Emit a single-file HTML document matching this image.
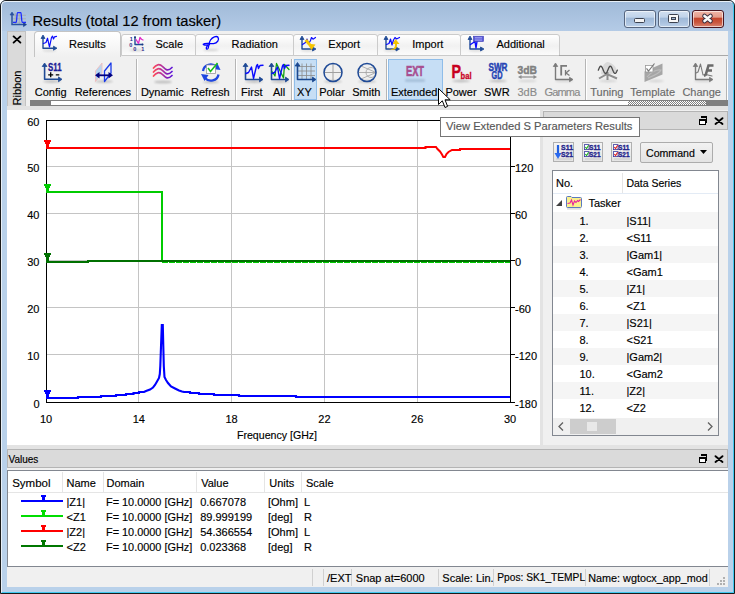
<!DOCTYPE html><html><head><meta charset="utf-8"><style>
*{margin:0;padding:0;box-sizing:border-box}
html,body{width:735px;height:594px;overflow:hidden;background:#fff}
body{position:relative;font-family:"Liberation Sans", sans-serif;}
.t{position:absolute;white-space:nowrap;line-height:1;-webkit-text-stroke:0.15px currentColor;}
.b{position:absolute}
svg{position:absolute;overflow:visible}
</style></head><body>
<div class="b" style="left:0px;top:0px;width:735px;height:594px;background:#b9d1ea;border-radius:6px 6px 0 0;"></div>
<div class="b" style="left:0px;top:0px;width:735px;height:31px;background:linear-gradient(#9fb9d8,#b4cbe6);border-radius:6px 6px 0 0;"></div>
<div class="b" style="left:0px;top:0px;width:735px;height:594px;border:1px solid #1a1a1a;border-radius:6px 6px 0 0;"></div>
<div class="b" style="left:1px;top:1px;width:733px;height:592px;border-left:1px solid #e8f0f8;border-top:1px solid #e8f0f8;border-right:1px solid #40c8f0;border-bottom:1px solid #40c8f0;border-radius:5px 5px 0 0;"></div>
<svg style="left:0;top:0" width="30" height="30" viewBox="0 0 30 30">
<path d="M13 15.3H26M13 18.8H26M13 22.3H26M15.3 13V24M19.3 13V24" stroke="#a8a8a0" stroke-width="0.7" fill="none"/>
<path d="M12 13.5V24.6H25" stroke="#2a52a0" stroke-width="1.5" fill="none"/>
<path d="M10 15L12 12L14 15Z" fill="#2a52a0" stroke="#2a52a0" stroke-width="0.6"/><path d="M23.5 22.6L26.5 24.6L23.5 26.6Z" fill="#1a4090" stroke="#1a4090" stroke-width="0.6"/>
<path d="M13 22.3H16.3C16.8 22.3 16.8 12.6 17.5 12.6H20.8C21.5 12.6 21.5 22.3 22.2 22.3H26" stroke="#1d2cff" stroke-width="1.3" fill="none"/>
</svg>
<div class="t" style="left:32.5px;top:14px;font-size:14.7px;color:#000;">Results (total 12 from tasker)</div>
<div class="b" style="left:624px;top:10px;width:32px;height:18px;background:linear-gradient(#d2e0f0 0%,#c0d3ea 40%,#9fb9d8 42%,#a9c1de 70%,#bcd1ea 100%);border:1px solid #56657e;border-radius:3px;box-shadow:inset 0 0 0 1px rgba(255,255,255,0.6);"></div>
<div class="b" style="left:658px;top:10px;width:32px;height:18px;background:linear-gradient(#d2e0f0 0%,#c0d3ea 40%,#9fb9d8 42%,#a9c1de 70%,#bcd1ea 100%);border:1px solid #56657e;border-radius:3px;box-shadow:inset 0 0 0 1px rgba(255,255,255,0.6);"></div>
<div class="b" style="left:692px;top:10px;width:32px;height:18px;background:linear-gradient(#f0b6a8 0%,#e49c8a 40%,#c4452c 42%,#c9553c 70%,#d88472 100%);border:1px solid #4a1620;border-radius:3px;box-shadow:inset 0 0 0 1px rgba(255,255,255,0.6);"></div>
<div class="b" style="left:634px;top:18px;width:11px;height:5px;background:#f4f4f4;border:1px solid #3c4250;border-radius:1.5px"></div>
<div class="b" style="left:668px;top:14px;width:11px;height:9px;background:#f8f8f8;border:1px solid #3c4250;border-radius:1.5px"></div>
<div class="b" style="left:671px;top:17px;width:5px;height:3px;background:#9fb5cf;border:1px solid #3c4250;"></div>
<svg style="left:700px;top:12px" width="16" height="14" viewBox="0 0 16 14"><path d="M4.5 4L10.5 9M10.5 4L4.5 9" stroke="#3c3040" stroke-width="4.6" stroke-linecap="round"/><path d="M4.5 4L10.5 9M10.5 4L4.5 9" stroke="#fafafa" stroke-width="2.6" stroke-linecap="round"/></svg>
<div class="b" style="left:7px;top:31px;width:721px;height:556px;background:#f0f0f0;"></div>
<div class="b" style="left:7px;top:31px;width:19px;height:76px;background:#dadada;border:1px solid #c2c2c2;"></div>
<svg style="left:12px;top:35px" width="10" height="9" viewBox="0 0 10 9"><path d="M1.6 1.4L8.4 7.6M8.4 1.4L1.6 7.6" stroke="#000" stroke-width="1.9" stroke-linecap="round"/></svg>
<div class="t" style="left:16.5px;top:88px;font-size:11px;transform:translate(-50%,-50%) rotate(-90deg);transform-origin:center;">Ribbon</div>
<div class="b" style="left:121px;top:34px;width:75px;height:22px;background:linear-gradient(#ffffff,#f1f1f1 55%,#fbfbfb);border:1px solid #cbcbcb;border-radius:3px 3px 0 0;"></div>
<div class="b" style="left:195px;top:34px;width:99px;height:22px;background:linear-gradient(#ffffff,#f1f1f1 55%,#fbfbfb);border:1px solid #cbcbcb;border-radius:3px 3px 0 0;"></div>
<div class="b" style="left:293px;top:34px;width:85px;height:22px;background:linear-gradient(#ffffff,#f1f1f1 55%,#fbfbfb);border:1px solid #cbcbcb;border-radius:3px 3px 0 0;"></div>
<div class="b" style="left:377px;top:34px;width:84px;height:22px;background:linear-gradient(#ffffff,#f1f1f1 55%,#fbfbfb);border:1px solid #cbcbcb;border-radius:3px 3px 0 0;"></div>
<div class="b" style="left:460px;top:34px;width:100px;height:22px;background:linear-gradient(#ffffff,#f1f1f1 55%,#fbfbfb);border:1px solid #cbcbcb;border-radius:3px 3px 0 0;"></div>
<div class="b" style="left:34px;top:31px;width:87px;height:26px;background:linear-gradient(#ffffff,#f8f8f8 50%,#f0f0f0);border:1px solid #c4c4c4;border-bottom:none;border-radius:4px 4px 0 0;"></div>
<div class="b" style="left:559px;top:55px;width:169px;height:1px;background:#a9a9a9;"></div>
<div class="t" style="left:69px;top:39px;font-size:11px;color:#000;">Results</div>
<div class="t" style="left:155.5px;top:39px;font-size:11px;color:#000;">Scale</div>
<div class="t" style="left:231.5px;top:39px;font-size:11px;color:#000;">Radiation</div>
<div class="t" style="left:328.3px;top:39px;font-size:11px;color:#000;">Export</div>
<div class="t" style="left:412.2px;top:39px;font-size:11px;color:#000;">Import</div>
<div class="t" style="left:496.5px;top:39px;font-size:11px;color:#000;">Additional</div>
<div class="b" style="left:136px;top:59px;width:1px;height:41px;background:#b5b5b5;border-right:1px solid #fff;width:2px"></div>
<div class="b" style="left:235px;top:59px;width:1px;height:41px;background:#b5b5b5;border-right:1px solid #fff;width:2px"></div>
<div class="b" style="left:291px;top:59px;width:1px;height:41px;background:#b5b5b5;border-right:1px solid #fff;width:2px"></div>
<div class="b" style="left:386px;top:59px;width:1px;height:41px;background:#b5b5b5;border-right:1px solid #fff;width:2px"></div>
<div class="b" style="left:585px;top:59px;width:1px;height:41px;background:#b5b5b5;border-right:1px solid #fff;width:2px"></div>
<div class="b" style="left:726px;top:59px;width:1px;height:41px;background:#b5b5b5;border-right:1px solid #fff;width:2px"></div>
<div class="b" style="left:294px;top:59px;width:23px;height:41px;background:#c6def5;border:1px solid #8fbde9;"></div>
<div class="b" style="left:388px;top:59px;width:55px;height:41px;background:#c6def5;border:1px solid #8fbde9;"></div>
<svg style="left:0;top:0" width="735" height="110" viewBox="0 0 735 110"><defs><filter id="blur1" x="-50%" y="-200%" width="200%" height="500%"><feGaussianBlur stdDeviation="0.8"/></filter><linearGradient id="wave" x1="0" x2="1" y1="0" y2="0"><stop offset="0" stop-color="#ff4a5a"/><stop offset="0.5" stop-color="#b030a0"/><stop offset="1" stop-color="#5a10d8"/></linearGradient></defs><ellipse cx="49.5" cy="50.5" rx="7" ry="1" fill="#000" opacity="0.12" filter="url(#blur1)"/><g transform="translate(38,33)"><path d="M5 4 V15.2 H17" stroke="#1f4a96" stroke-width="1.4" fill="none" stroke-linejoin="round"/><path d="M3 5.5 L5 2 L7 5.5Z" fill="#1f4a96" stroke="#1f4a96" stroke-width="0.8" stroke-linejoin="round"/><path d="M15.5 13.2 L19 15.2 L15.5 17.2Z" fill="#1f4a96" stroke="#1f4a96" stroke-width="0.8" stroke-linejoin="round"/></g><path transform="translate(38,33)" d="M5.5 10.5 L8 9.5 L9.5 5.2 L11.5 14 L13.5 4.5 L14.5 3.2 L15.5 6 L16.5 3.8 L18.5 3.4" stroke="#0a0aff" stroke-width="1.2" fill="none" stroke-linejoin="round" stroke-linecap="round" /><ellipse cx="136.5" cy="50.2" rx="7" ry="1" fill="#000" opacity="0.15" filter="url(#blur1)"/><g transform="translate(126,33)" fill="#2a2a8a" font-family="Liberation Sans" font-weight="bold" font-size="5.5"><text x="3.8" y="7.5">1</text><text x="3.3" y="14.3">0</text><text x="7.3" y="18.3">0</text><text x="15.3" y="18.3">1</text></g><path transform="translate(126,33)" d="M9 4.2 L9 11.5 L16.5 11.5" stroke="#1f4a96" stroke-width="1.4" fill="none" stroke-linejoin="round" stroke-linecap="round" /><circle cx="135" cy="37.2" r="1" fill="#1a3a80"/><circle cx="142.5" cy="44.5" r="1" fill="#1a3a80"/><path transform="translate(126,33)" d="M10 6.5 L12.5 10.3 L14 4.5 L15.5 6.2 L17 7" stroke="#e02ac8" stroke-width="1.3" fill="none" stroke-linejoin="round" stroke-linecap="round" /><ellipse cx="211" cy="50" rx="7.5" ry="1" fill="#000" opacity="0.15" filter="url(#blur1)"/><path transform="translate(200,35)" d="M3.3 9.2 C5 7.6 10 8.8 13.5 8.6 C17.5 8 19.5 4.5 18 2.3 C16.5 0.5 12.5 2 10.5 5 C8.5 8 9 11.5 8 13.5 C7 15 5.5 13.5 6.8 11.5 C7.5 10.2 9 9.8 10 9.7 C5.5 10.5 3 10 3.3 9.2Z" stroke="#0000ff" stroke-width="1.35" fill="none"/><ellipse cx="308" cy="50.5" rx="7" ry="1" fill="#000" opacity="0.12" filter="url(#blur1)"/><g transform="translate(297,33)"><path d="M5 5 V16 H17" stroke="#1f4a96" stroke-width="1.4" fill="none" stroke-linejoin="round"/><path d="M3 6.5 L5 3 L7 6.5Z" fill="#1f4a96" stroke="#1f4a96" stroke-width="0.8" stroke-linejoin="round"/><path d="M15.5 14 L19 16 L15.5 18Z" fill="#1f4a96" stroke="#1f4a96" stroke-width="0.8" stroke-linejoin="round"/></g><path transform="translate(297,33)" d="M5.5 11.5 L8.5 9.5 L10 6 L11.5 11 L13.5 7.5 L14.5 4.5 L16 6.2 L18.5 4.5" stroke="#0a0aff" stroke-width="1.2" fill="none" stroke-linejoin="round" stroke-linecap="round" /><path transform="translate(297,33)" d="M7.5 8 L10 6 L14 11 L18.5 11.5 L14.5 17 L11.5 12.5 Z" fill="#f5c400"/><ellipse cx="391" cy="50.5" rx="7" ry="1" fill="#000" opacity="0.12" filter="url(#blur1)"/><g transform="translate(380,33)"><path d="M6 5 V16 H17.5" stroke="#1f4a96" stroke-width="1.4" fill="none" stroke-linejoin="round"/><path d="M4 6.5 L6 3 L8 6.5Z" fill="#1f4a96" stroke="#1f4a96" stroke-width="0.8" stroke-linejoin="round"/><path d="M16.0 14 L19.5 16 L16.0 18Z" fill="#1f4a96" stroke="#1f4a96" stroke-width="0.8" stroke-linejoin="round"/></g><path transform="translate(380,33)" d="M6.5 11.5 L9 10.5 L10.5 6 L12 12 L13.5 7 L15 4.5 L16.5 6 L19.5 4.5" stroke="#0a0aff" stroke-width="1.2" fill="none" stroke-linejoin="round" stroke-linecap="round" /><path transform="translate(380,33)" d="M8 14 C10 17 15 17 15 12 L15 11 L12.5 11 L15.5 6 L19.5 11 L17 11 L17 12.5 C17 18 10.5 18 8 14Z" fill="#f5c400"/><ellipse cx="476" cy="50.5" rx="7" ry="1" fill="#000" opacity="0.12" filter="url(#blur1)"/><g transform="translate(465,33)"><path d="M5 5 V16 H17" stroke="#1f4a96" stroke-width="1.4" fill="none" stroke-linejoin="round"/><path d="M3 6.5 L5 3 L7 6.5Z" fill="#1f4a96" stroke="#1f4a96" stroke-width="0.8" stroke-linejoin="round"/><path d="M15.5 14 L19 16 L15.5 18Z" fill="#1f4a96" stroke="#1f4a96" stroke-width="0.8" stroke-linejoin="round"/></g><path transform="translate(465,33)" d="M5.5 11.5 L8.5 9.5 L10 8.5 L11 15 L12 8.5" stroke="#0a0aff" stroke-width="1.4" fill="none" stroke-linejoin="round" stroke-linecap="round" /><rect x="473.5" y="36.2" width="10" height="5.3" fill="#5a5adc" stroke="#3a3ab0" stroke-width="0.6"/><path d="M475 37.5h7M475 39h7M475 40.3h7" stroke="#c8c8ff" stroke-width="0.5"/><ellipse cx="52" cy="81.5" rx="9" ry="1.2" fill="#000" opacity="0.22" filter="url(#blur1)"/><g transform="translate(38,59)"><path d="M6.6 6 V20.3 H22" stroke="#1f4a96" stroke-width="1.6" fill="none" stroke-linejoin="round"/><path d="M4.199999999999999 7.5 L6.6 4 L9.0 7.5Z" fill="#1f4a96" stroke="#1f4a96" stroke-width="0.8" stroke-linejoin="round"/><path d="M20.5 17.900000000000002 L24 20.3 L20.5 22.7Z" fill="#1f4a96" stroke="#1f4a96" stroke-width="0.8" stroke-linejoin="round"/></g><text x="48" y="70.6" font-family="Liberation Sans" font-weight="bold" font-size="10" fill="#1a1a96" stroke="#1a1a96" stroke-width="0.3" textLength="13.5" lengthAdjust="spacingAndGlyphs">S11</text><path d="M48.2 74.8h5M50.7 72.3v5M55.8 74.8h3.5" stroke="#000" stroke-width="1.3"/><ellipse cx="104" cy="81.5" rx="9" ry="1.2" fill="#000" opacity="0.22" filter="url(#blur1)"/><path d="M95.5 81.5 V71 L102 63 V73Z" fill="#a8d0f0" stroke="#f0b0b0" stroke-width="0.9" opacity="0.8"/><path d="M104.5 81.5 V71 L111 63 V73Z" fill="none" stroke="#1a3ae8" stroke-width="1.3" stroke-linejoin="round"/><path d="M98.5 75.3 H110.5" stroke="#000080" stroke-width="1.8"/><path d="M95 75.3 L99.5 72 V78.6Z M113 75.3 L108.5 72 V78.6Z" fill="#000080"/><ellipse cx="163" cy="82" rx="9" ry="1.3" fill="#000" opacity="0.22" filter="url(#blur1)"/><path transform="translate(149,59)" d="M4.5 9 C7 5.5 10.5 4.5 13.5 7.5 C16.5 10.5 18.5 13 23 8.5" stroke="url(#wave)" stroke-width="1.7" fill="none" stroke-linecap="round"/><path transform="translate(149,63)" d="M4.5 9 C7 5.5 10.5 4.5 13.5 7.5 C16.5 10.5 18.5 13 23 8.5" stroke="url(#wave)" stroke-width="1.7" fill="none" stroke-linecap="round"/><path transform="translate(149,67)" d="M4.5 9 C7 5.5 10.5 4.5 13.5 7.5 C16.5 10.5 18.5 13 23 8.5" stroke="url(#wave)" stroke-width="1.7" fill="none" stroke-linecap="round"/><ellipse cx="211" cy="82" rx="8" ry="1.2" fill="#000" opacity="0.22" filter="url(#blur1)"/><g transform="translate(197,59)"><path d="M6 12 C7 5.5 15 3.5 19.5 8" stroke="#1e46e0" stroke-width="2.3" fill="none"/><path d="M16 10 L23.5 11 L20.5 4.5Z" fill="#1e46e0"/><path d="M21.5 15.5 C20.5 22 12 23.5 8 19" stroke="#1e46e0" stroke-width="2.3" fill="none"/><path d="M11.5 16 L4 15 L7.5 22Z" fill="#1e46e0"/><rect x="9.5" y="6" width="9" height="8.5" fill="#fff" stroke="#9a9a9a" stroke-width="0.8"/><path d="M11 9 L13.5 12.5 L20.5 4" stroke="#18c018" stroke-width="1.6" fill="none"/></g><ellipse cx="254" cy="81.5" rx="9" ry="1.2" fill="#000" opacity="0.22" filter="url(#blur1)"/><g transform="translate(240,59)"><path d="M5.5 6 V20.5 H21" stroke="#1f4a96" stroke-width="1.6" fill="none" stroke-linejoin="round"/><path d="M3.1 7.5 L5.5 4 L7.9 7.5Z" fill="#1f4a96" stroke="#1f4a96" stroke-width="0.8" stroke-linejoin="round"/><path d="M19.5 18.1 L23 20.5 L19.5 22.9Z" fill="#1f4a96" stroke="#1f4a96" stroke-width="0.8" stroke-linejoin="round"/></g><path transform="translate(240,59)" d="M6 14.5 L8.5 13.5 L11.5 8 L13.5 19.5 L16.5 7 L17.5 5.5 L18.5 9.5 L20 6.5 L23 6.3" stroke="#0a0aff" stroke-width="1.4" fill="none" stroke-linejoin="round" stroke-linecap="round" /><ellipse cx="280" cy="81.5" rx="9" ry="1.2" fill="#000" opacity="0.22" filter="url(#blur1)"/><g transform="translate(266,59)"><path d="M5.5 6 V20.5 H21" stroke="#1f4a96" stroke-width="1.6" fill="none" stroke-linejoin="round"/><path d="M3.1 7.5 L5.5 4 L7.9 7.5Z" fill="#1f4a96" stroke="#1f4a96" stroke-width="0.8" stroke-linejoin="round"/><path d="M19.5 18.1 L23 20.5 L19.5 22.9Z" fill="#1f4a96" stroke="#1f4a96" stroke-width="0.8" stroke-linejoin="round"/></g><path transform="translate(266,59)" d="M6.5 13 L9 17 L10.5 4.5 L17.5 19 L18.5 5.5 L23 10.5" stroke="#10a010" stroke-width="1.3" fill="none" stroke-linejoin="round" stroke-linecap="round" /><path transform="translate(266,59)" d="M6 14.5 L8.5 13.5 L11.5 8 L13.5 19.5 L16.5 7 L17.5 5.5 L18.5 9.5 L20 6.5 L23 6.3" stroke="#0a0aff" stroke-width="1.4" fill="none" stroke-linejoin="round" stroke-linecap="round" /><g stroke="#8a8a8a" stroke-width="0.8"><path d="M302 63.5V79M306.5 63.5V79M311 63.5V79M298 66.5H315M298 71H315M298 75.5H315"/></g><g transform="translate(0,0)"><path d="M297.5 64.5 V79.5 H314" stroke="#1a4890" stroke-width="1.6" fill="none" stroke-linejoin="round"/><path d="M295.1 66.0 L297.5 62.5 L299.9 66.0Z" fill="#1a4890" stroke="#1a4890" stroke-width="0.8" stroke-linejoin="round"/><path d="M312.5 77.1 L316 79.5 L312.5 81.9Z" fill="#1a4890" stroke="#1a4890" stroke-width="0.8" stroke-linejoin="round"/></g><ellipse cx="333" cy="81.5" rx="9" ry="1.2" fill="#000" opacity="0.22" filter="url(#blur1)"/><path d="M324 72.5H342M333 63.5V81.5" stroke="#a0a0a0" stroke-width="1"/><circle cx="333" cy="72.5" r="9" fill="none" stroke="#1f4a96" stroke-width="1.5"/><ellipse cx="367" cy="81.5" rx="9" ry="1.2" fill="#000" opacity="0.22" filter="url(#blur1)"/><g stroke="#a0a0a0" stroke-width="0.8" fill="none"><path d="M358 72.5H376"/><circle cx="371" cy="72.5" r="5"/><path d="M361 66 L376 72.5 L361 79"/></g><circle cx="367" cy="72.5" r="9" fill="none" stroke="#1f4a96" stroke-width="1.5"/><rect x="405" y="79.5" width="20" height="2" rx="1" fill="#7a96b4" opacity="0.6" filter="url(#blur1)"/><text x="406" y="75.5" font-family="Liberation Sans" font-weight="bold" font-size="14.5" fill="#a84e90" stroke="#a84e90" stroke-width="0.6" textLength="18" lengthAdjust="spacingAndGlyphs">EXT</text><ellipse cx="461" cy="81" rx="9" ry="1.2" fill="#000" opacity="0.22" filter="url(#blur1)"/><text x="451.5" y="78" font-family="Liberation Sans" font-weight="bold" font-size="19" fill="#c8001e" stroke="#c8001e" stroke-width="0.5" textLength="9.5" lengthAdjust="spacingAndGlyphs">P</text><text x="460.5" y="78.5" font-family="Liberation Sans" font-weight="bold" font-size="9" fill="#c8001e" stroke="#c8001e" stroke-width="0.3" textLength="11" lengthAdjust="spacingAndGlyphs">bal</text><ellipse cx="498" cy="81" rx="9" ry="1.2" fill="#000" opacity="0.22" filter="url(#blur1)"/><text x="488.5" y="71" font-family="Liberation Sans" font-weight="bold" font-size="10" fill="#2443b4" stroke="#2443b4" stroke-width="0.45" textLength="19" lengthAdjust="spacingAndGlyphs">SWR</text><text x="491.5" y="79" font-family="Liberation Sans" font-weight="bold" font-size="10" fill="#2443b4" stroke="#2443b4" stroke-width="0.45" textLength="11" lengthAdjust="spacingAndGlyphs">GD</text><ellipse cx="527.5" cy="81" rx="9" ry="1" fill="#000" opacity="0.12" filter="url(#blur1)"/><text x="517.5" y="74" font-family="Liberation Sans" font-weight="bold" font-size="11.5" fill="#808080" stroke="#808080" stroke-width="0.4" textLength="19.5" lengthAdjust="spacingAndGlyphs">3dB</text><path d="M520 77H535" stroke="#8c8c8c" stroke-width="1.2"/><path d="M518 77L521.5 75V79Z M537 77L533.5 75V79Z" fill="#8c8c8c"/><ellipse cx="564" cy="81" rx="9" ry="1" fill="#000" opacity="0.12" filter="url(#blur1)"/><g transform="translate(548,59)"><path d="M7.5 6 V20.5 H23" stroke="#7a7a7a" stroke-width="1.4" fill="none" stroke-linejoin="round"/><path d="M5.3 7.5 L7.5 4 L9.7 7.5Z" fill="#7a7a7a" stroke="#7a7a7a" stroke-width="0.8" stroke-linejoin="round"/><path d="M21.5 18.3 L25 20.5 L21.5 22.7Z" fill="#7a7a7a" stroke="#7a7a7a" stroke-width="0.8" stroke-linejoin="round"/></g><path d="M561.2 75.5V65.8H567" stroke="#7a7a7a" stroke-width="1.8" fill="none"/><path d="M565.5 70V75.5M569.5 70L566 73L569.5 75.5" stroke="#7a7a7a" stroke-width="1.3" fill="none"/><ellipse cx="608" cy="81" rx="9" ry="1.2" fill="#000" opacity="0.12" filter="url(#blur1)"/><path d="M601 74 C602 64 606 62 608 62 C612 63 616 66 617 71 C614 74 604 76 601 74Z" fill="#c8c8c8" opacity="0.55"/><path d="M599 78.5 L607 74 L617 78.5 M607.5 72 V80" stroke="#8e8e8e" stroke-width="2" fill="none"/><path d="M598.30 70.15 L598.80 68.95 L599.30 67.85 L599.80 66.97 L600.30 66.40 L600.80 66.20 L601.30 66.40 L601.80 66.97 L602.30 67.85 L602.80 68.95 L603.30 70.15 L603.80 71.32 L604.30 72.32 L604.80 73.06 L605.30 73.45 L605.80 73.45 L606.30 73.06 L606.80 72.32 L607.30 71.32 L607.80 70.15 L608.30 68.95 L608.80 67.85 L609.30 66.97 L609.80 66.40 L610.30 66.20 L610.80 66.40 L611.30 66.97 L611.80 67.85 L612.30 68.95 L612.80 70.15 L613.30 71.32 L613.80 72.32 L614.30 73.06 L614.80 73.45 L615.30 73.45 L615.80 73.06 L616.30 72.32 L616.80 71.32 L617.30 70.15" stroke="#4a4a4a" stroke-width="1.3" fill="none" stroke-linecap="round"/><ellipse cx="656" cy="81" rx="8" ry="1.2" fill="#000" opacity="0.12" filter="url(#blur1)"/><path d="M644.5 82 V71.5 L662.5 63.5 V74.5Z" fill="#a6a6a6"/><path d="M647 77 C651 72 657 69 661 70 C660 73 653 76 648 78" stroke="#bdbdbd" stroke-width="1.2" fill="none"/><rect x="645.5" y="65.5" width="7.5" height="6.5" fill="#fff" stroke="#9a9a9a" stroke-width="0.8"/><path d="M646.5 68.3 L648.5 71 L654.5 63.5" stroke="#7a7a7a" stroke-width="1.2" fill="none"/><ellipse cx="703" cy="81" rx="9" ry="1" fill="#000" opacity="0.12" filter="url(#blur1)"/><g transform="translate(688,59)"><path d="M7.5 6 V20.5 H23" stroke="#7a7a7a" stroke-width="1.4" fill="none" stroke-linejoin="round"/><path d="M5.3 7.5 L7.5 4 L9.7 7.5Z" fill="#7a7a7a" stroke="#7a7a7a" stroke-width="0.8" stroke-linejoin="round"/><path d="M21.5 18.3 L25 20.5 L21.5 22.7Z" fill="#7a7a7a" stroke="#7a7a7a" stroke-width="0.8" stroke-linejoin="round"/></g><path transform="translate(688,59)" d="M8 14 L10 13 L12.5 5 L15 16 L18 15.5 L24 17" stroke="#7a7a7a" stroke-width="1.1" fill="none" stroke-linejoin="round" stroke-linecap="round" /><path d="M705.5 75.5 L708.5 65.5H713.5M707 70.5H712M705.5 75.5H704" stroke="#6a6a6a" stroke-width="2.6" fill="none"/></svg>
<div class="t" style="left:-9.299999999999997px;width:120px;text-align:center;top:86.5px;font-size:11px;color:#000;">Config</div>
<div class="t" style="left:42.8px;width:120px;text-align:center;top:86.5px;font-size:11px;color:#000;">References</div>
<div class="t" style="left:102.30000000000001px;width:120px;text-align:center;top:86.5px;font-size:11px;color:#000;">Dynamic</div>
<div class="t" style="left:150.3px;width:120px;text-align:center;top:86.5px;font-size:11px;color:#000;">Refresh</div>
<div class="t" style="left:191.8px;width:120px;text-align:center;top:86.5px;font-size:11px;color:#000;">First</div>
<div class="t" style="left:219px;width:120px;text-align:center;top:86.5px;font-size:11px;color:#000;">All</div>
<div class="t" style="left:244.39999999999998px;width:120px;text-align:center;top:86.5px;font-size:11px;color:#000;">XY</div>
<div class="t" style="left:272px;width:120px;text-align:center;top:86.5px;font-size:11px;color:#000;">Polar</div>
<div class="t" style="left:306.3px;width:120px;text-align:center;top:86.5px;font-size:11px;color:#000;">Smith</div>
<div class="t" style="left:354.2px;width:120px;text-align:center;top:86.5px;font-size:11px;color:#000;">Extended</div>
<div class="t" style="left:401px;width:120px;text-align:center;top:86.5px;font-size:11px;color:#000;">Power</div>
<div class="t" style="left:436.8px;width:120px;text-align:center;top:86.5px;font-size:11px;color:#000;">SWR</div>
<div class="t" style="left:467.20000000000005px;width:120px;text-align:center;top:86.5px;font-size:11px;color:#8a8a8a;">3dB</div>
<div class="t" style="left:502px;width:120px;text-align:center;top:86.5px;font-size:11px;color:#8a8a8a;"><span style="letter-spacing:-0.8px">Gamma</span></div>
<div class="t" style="left:546.9px;width:120px;text-align:center;top:86.5px;font-size:11px;color:#6a6a6a;">Tuning</div>
<div class="t" style="left:592.7px;width:120px;text-align:center;top:86.5px;font-size:11px;color:#6a6a6a;">Template</div>
<div class="t" style="left:641.7px;width:120px;text-align:center;top:86.5px;font-size:11px;color:#6a6a6a;">Change</div>
<div class="b" style="left:30px;top:100px;width:698px;height:6px;background:#fff;border:1px solid #7f7f7f;border-right:none"></div>
<div class="b" style="left:30px;top:100px;width:21px;height:6px;background:#7f7f7f;"></div>
<div class="b" style="left:628px;top:101px;width:79px;height:4px;background-image:repeating-conic-gradient(#7f7f7f 0% 25%, #fff 0% 50%);background-size:2px 2px;"></div>
<div class="b" style="left:706px;top:100px;width:22px;height:6px;background:#7f7f7f;"></div>
<div class="b" style="left:7px;top:106px;width:721px;height:4px;background:#e3e3e3;"></div>
<div class="b" style="left:7px;top:110px;width:533px;height:335px;background:#fff;"></div>
<div class="b" style="left:540px;top:110px;width:3px;height:335px;background:#e3e3e3;"></div>
<svg style="left:0;top:0" width="735" height="594" viewBox="0 0 735 594"><g shape-rendering="crispEdges" stroke="#c4c4c4" stroke-width="1"><line x1="46" y1="354.5" x2="510" y2="354.5"/><line x1="46" y1="307.5" x2="510" y2="307.5"/><line x1="46" y1="260.5" x2="510" y2="260.5"/><line x1="46" y1="213.5" x2="510" y2="213.5"/><line x1="46" y1="166.5" x2="510" y2="166.5"/><line x1="138.5" y1="120" x2="138.5" y2="402"/><line x1="231.5" y1="120" x2="231.5" y2="402"/><line x1="324.5" y1="120" x2="324.5" y2="402"/><line x1="417.5" y1="120" x2="417.5" y2="402"/></g><g shape-rendering="crispEdges" stroke="#000" stroke-width="1" fill="none"><rect x="46.5" y="120.5" width="464" height="282"/><line x1="510" y1="402.5" x2="515" y2="402.5"/><line x1="510" y1="354.5" x2="515" y2="354.5"/><line x1="510" y1="307.5" x2="515" y2="307.5"/><line x1="510" y1="260.5" x2="515" y2="260.5"/><line x1="510" y1="213.5" x2="515" y2="213.5"/><line x1="510" y1="166.5" x2="515" y2="166.5"/></g><polyline fill="none" stroke="#ff0000" stroke-width="2" stroke-linejoin="miter" points="46,148 425.5,148 425.5,147 436,147 437.5,149 440,151.5 442,154.5 443.3,157 445,157 446.5,154 448.5,152 452,150 460,150 460,149 510,149"/><polyline fill="none" stroke="#00cc00" stroke-width="2" stroke-linejoin="miter" points="46,192 162,192 162,262"/><line x1="162" y1="262.5" x2="510" y2="262.5" stroke="#00cc00" stroke-width="1" stroke-dasharray="6 1" shape-rendering="crispEdges"/><polyline fill="none" stroke="#007000" stroke-width="2" stroke-linejoin="miter" points="46,262 88,262 88,261 510,261"/><polyline fill="none" stroke="#0000ff" stroke-width="2.1" stroke-linejoin="miter" points="46,398 78,398 78,397 101,397 101,396 116,396 116,395 126,395 126,394 133.5,394 133.5,393 139,393 139,392 144,392 146,391 150,389.5 153,387.5 155,385 157,381.5 159,378 159.8,374 160.3,366 160.8,352 161.8,325 162.8,325 163.3,346 163.8,366 164.5,377 166,380 168,383 171,386.5 175,388.5 179,390.5 182,391.5 184,392 190,392 190,393 199,393 199,394 214,394 214,395 239,395 239,396 296,396 296,397 510,397"/><polygon fill="#ff0000" shape-rendering="crispEdges" points="44,140 51,140 51,142 50,142 50,144 49,144 49,148 46,148 46,144 45,144 45,142 44,142"/><polygon fill="#00cc00" shape-rendering="crispEdges" points="44,184 51,184 51,186 50,186 50,188 49,188 49,192 46,192 46,188 45,188 45,186 44,186"/><polygon fill="#007000" shape-rendering="crispEdges" points="44,253 51,253 51,255 50,255 50,257 49,257 49,261 46,261 46,257 45,257 45,255 44,255"/><polygon fill="#0000ff" shape-rendering="crispEdges" points="44,390 51,390 51,392 50,392 50,394 49,394 49,398 46,398 46,394 45,394 45,392 44,392"/></svg>
<div class="t" style="left:-60.5px;width:100px;text-align:right;top:399px;font-size:11px;color:#000;">0</div>
<div class="t" style="left:-60.5px;width:100px;text-align:right;top:351px;font-size:11px;color:#000;">10</div>
<div class="t" style="left:-60.5px;width:100px;text-align:right;top:304px;font-size:11px;color:#000;">20</div>
<div class="t" style="left:-60.5px;width:100px;text-align:right;top:257px;font-size:11px;color:#000;">30</div>
<div class="t" style="left:-60.5px;width:100px;text-align:right;top:210px;font-size:11px;color:#000;">40</div>
<div class="t" style="left:-60.5px;width:100px;text-align:right;top:163px;font-size:11px;color:#000;">50</div>
<div class="t" style="left:-60.5px;width:100px;text-align:right;top:117px;font-size:11px;color:#000;">60</div>
<div class="t" style="left:515px;top:398.5px;font-size:11px;color:#000;">-180</div>
<div class="t" style="left:515px;top:350.5px;font-size:11px;color:#000;">-120</div>
<div class="t" style="left:515px;top:303.5px;font-size:11px;color:#000;">-60</div>
<div class="t" style="left:515px;top:256.5px;font-size:11px;color:#000;">0</div>
<div class="t" style="left:515px;top:209.5px;font-size:11px;color:#000;">60</div>
<div class="t" style="left:515px;top:162.5px;font-size:11px;color:#000;">120</div>
<div class="t" style="left:-14.0px;width:120px;text-align:center;top:413.5px;font-size:11px;color:#000;">10</div>
<div class="t" style="left:78.80000000000001px;width:120px;text-align:center;top:413.5px;font-size:11px;color:#000;">14</div>
<div class="t" style="left:171.6px;width:120px;text-align:center;top:413.5px;font-size:11px;color:#000;">18</div>
<div class="t" style="left:264.4px;width:120px;text-align:center;top:413.5px;font-size:11px;color:#000;">22</div>
<div class="t" style="left:357.2px;width:120px;text-align:center;top:413.5px;font-size:11px;color:#000;">26</div>
<div class="t" style="left:450.0px;width:120px;text-align:center;top:413.5px;font-size:11px;color:#000;">30</div>
<div class="t" style="left:217px;width:120px;text-align:center;top:429.5px;font-size:10.6px;color:#000;">Frequency [GHz]</div>
<div class="b" style="left:543px;top:111px;width:185px;height:19px;background:#dadada;border:1px solid #b4b4b4;"></div>
<svg style="left:699px;top:116px" width="9" height="10" viewBox="0 0 9 10" shape-rendering="crispEdges"><path d="M2.5 1H7.5V6.5H6.5" stroke="#000" fill="none"/><rect x="2" y="0" width="6" height="2" fill="#000"/><rect x="0.5" y="3.5" width="5.5" height="5" stroke="#000" fill="#fff"/><rect x="0" y="3" width="6.5" height="2" fill="#000"/></svg>
<svg style="left:714px;top:116.5px" width="10" height="9" viewBox="0 0 10 9"><path d="M1.5 1.2L8.5 7M8.5 1.2L1.5 7" stroke="#000" stroke-width="1.9" stroke-linecap="round"/></svg>
<div class="b" style="left:553px;top:142px;width:21px;height:20px;background:linear-gradient(#f4f4f4,#e4e4e4);border:1px solid #b0b0b0;"></div>
<div class="b" style="left:582px;top:142px;width:21px;height:20px;background:linear-gradient(#f4f4f4,#e4e4e4);border:1px solid #b0b0b0;"></div>
<div class="b" style="left:611px;top:142px;width:21px;height:20px;background:linear-gradient(#f4f4f4,#e4e4e4);border:1px solid #b0b0b0;"></div>
<div class="b" style="left:640px;top:142px;width:73px;height:21px;background:linear-gradient(#f2f2f2,#e3e3e3);border:1px solid #acacac;border-radius:2px"></div>
<div class="t" style="left:646px;top:147.5px;font-size:10.6px;color:#000;">Command</div>
<svg style="left:700px;top:150px" width="7" height="4" viewBox="0 0 7 4"><path d="M0 0H7L3.5 4Z" fill="#000"/></svg>
<svg style="left:553px;top:142px" width="22" height="20" viewBox="0 0 22 20"><path d="M5 3V13" stroke="#1f5fe0" stroke-width="2.2"/><path d="M1.5 11L5 17L8.5 11Z" fill="#2a6af0"/><text x="8" y="8.3" font-size="7.6" font-family="Liberation Sans" font-weight="bold" fill="#24248c" stroke="#24248c" stroke-width="0.35" textLength="12" lengthAdjust="spacingAndGlyphs">S11</text><text x="8" y="15.3" font-size="7.6" font-family="Liberation Sans" font-weight="bold" fill="#24248c" stroke="#24248c" stroke-width="0.35" textLength="12" lengthAdjust="spacingAndGlyphs">S21</text><rect x="3" y="16.5" width="16" height="1" fill="#000" opacity="0.12"/></svg>
<svg style="left:582px;top:142px" width="22" height="20" viewBox="0 0 22 20"><g stroke="#3a3aa0" stroke-width="0.8" fill="#fff"><rect x="2.4" y="2.6" width="4.6" height="5"/><rect x="2.4" y="9.6" width="4.6" height="5"/></g><path d="M3.3 5 L4.6 6.6 L6.6 3.3 M3.3 12 L4.6 13.6 L6.6 10.3" stroke="#20b020" stroke-width="1.1" fill="none"/><text x="7" y="8.3" font-size="7.6" font-family="Liberation Sans" font-weight="bold" fill="#24248c" stroke="#24248c" stroke-width="0.35" textLength="11.5" lengthAdjust="spacingAndGlyphs">S11</text><text x="7" y="15.3" font-size="7.6" font-family="Liberation Sans" font-weight="bold" fill="#24248c" stroke="#24248c" stroke-width="0.35" textLength="11.5" lengthAdjust="spacingAndGlyphs">S21</text><rect x="3" y="16.5" width="16" height="1" fill="#000" opacity="0.12"/></svg>
<svg style="left:611px;top:142px" width="22" height="20" viewBox="0 0 22 20"><g stroke="#3a3aa0" stroke-width="0.8" fill="#fff"><rect x="2.4" y="2.6" width="4.6" height="5"/><rect x="2.4" y="9.6" width="4.6" height="5"/></g><path d="M3.3 5 L4.6 6.6 L6.6 3.3 M3.3 12 L4.6 13.6 L6.6 10.3" stroke="#e02020" stroke-width="1.1" fill="none"/><text x="7" y="8.3" font-size="7.6" font-family="Liberation Sans" font-weight="bold" fill="#24248c" stroke="#24248c" stroke-width="0.35" textLength="11.5" lengthAdjust="spacingAndGlyphs">S11</text><text x="7" y="15.3" font-size="7.6" font-family="Liberation Sans" font-weight="bold" fill="#24248c" stroke="#24248c" stroke-width="0.35" textLength="11.5" lengthAdjust="spacingAndGlyphs">S21</text><rect x="3" y="16.5" width="16" height="1" fill="#000" opacity="0.12"/></svg>
<div class="b" style="left:552px;top:170px;width:167px;height:266px;background:#fff;border:1px solid #828790;"></div>
<div class="b" style="left:553px;top:171px;width:165px;height:23px;background:#fff;border-bottom:1px solid #e3ebf5;"></div>
<div class="b" style="left:622px;top:173px;width:1px;height:20px;background:#e5e5e5;"></div>
<div class="t" style="left:556px;top:178px;font-size:11px;color:#000;">No.</div>
<div class="t" style="left:626.4px;top:178px;font-size:10.5px;color:#000;">Data Series</div>
<svg style="left:556px;top:200px" width="6" height="6" viewBox="0 0 6 6"><path d="M6 0V6H0Z" fill="#404040"/></svg>
<svg style="left:565px;top:195px" width="18" height="16" viewBox="0 0 18 16"><rect x="2" y="13.3" width="14" height="1.2" fill="#000" opacity="0.18"/><path d="M1.5 2.5 Q1.5 1.5 2.5 1.5 H6 L7 2.5 H15.5 Q16.5 2.5 16.5 3.5 V11.5 Q16.5 12.5 15.5 12.5 H2.5 Q1.5 12.5 1.5 11.5 Z" fill="#f9f18c" stroke="#5b79c0" stroke-width="1"/><path d="M2.5 8.5 L5 8 L6.5 5 L8 10 L9.5 6 L11 7.5 L12.5 5.5 L13.5 6.5 L15.5 4.5" stroke="#e8209c" stroke-width="1.1" fill="none"/></svg>
<div class="t" style="left:588.4px;top:198px;font-size:11px;color:#000;">Tasker</div>
<div class="b" style="left:553px;top:212px;width:165px;height:17px;background:#f5f5f5;"></div>
<div class="t" style="left:579.5px;top:215.5px;font-size:11px;color:#000;">1.</div>
<div class="t" style="left:626.5px;top:215.5px;font-size:11px;color:#000;">|S11|</div>
<div class="t" style="left:579.5px;top:232.5px;font-size:11px;color:#000;">2.</div>
<div class="t" style="left:626.5px;top:232.5px;font-size:11px;color:#000;">&lt;S11</div>
<div class="b" style="left:553px;top:246px;width:165px;height:17px;background:#f5f5f5;"></div>
<div class="t" style="left:579.5px;top:249.5px;font-size:11px;color:#000;">3.</div>
<div class="t" style="left:626.5px;top:249.5px;font-size:11px;color:#000;">|Gam1|</div>
<div class="t" style="left:579.5px;top:266.5px;font-size:11px;color:#000;">4.</div>
<div class="t" style="left:626.5px;top:266.5px;font-size:11px;color:#000;">&lt;Gam1</div>
<div class="b" style="left:553px;top:280px;width:165px;height:17px;background:#f5f5f5;"></div>
<div class="t" style="left:579.5px;top:283.5px;font-size:11px;color:#000;">5.</div>
<div class="t" style="left:626.5px;top:283.5px;font-size:11px;color:#000;">|Z1|</div>
<div class="t" style="left:579.5px;top:300.5px;font-size:11px;color:#000;">6.</div>
<div class="t" style="left:626.5px;top:300.5px;font-size:11px;color:#000;">&lt;Z1</div>
<div class="b" style="left:553px;top:314px;width:165px;height:17px;background:#f5f5f5;"></div>
<div class="t" style="left:579.5px;top:317.5px;font-size:11px;color:#000;">7.</div>
<div class="t" style="left:626.5px;top:317.5px;font-size:11px;color:#000;">|S21|</div>
<div class="t" style="left:579.5px;top:334.5px;font-size:11px;color:#000;">8.</div>
<div class="t" style="left:626.5px;top:334.5px;font-size:11px;color:#000;">&lt;S21</div>
<div class="b" style="left:553px;top:348px;width:165px;height:17px;background:#f5f5f5;"></div>
<div class="t" style="left:579.5px;top:351.5px;font-size:11px;color:#000;">9.</div>
<div class="t" style="left:626.5px;top:351.5px;font-size:11px;color:#000;">|Gam2|</div>
<div class="t" style="left:579.5px;top:368.5px;font-size:11px;color:#000;">10.</div>
<div class="t" style="left:626.5px;top:368.5px;font-size:11px;color:#000;">&lt;Gam2</div>
<div class="b" style="left:553px;top:382px;width:165px;height:17px;background:#f5f5f5;"></div>
<div class="t" style="left:579.5px;top:385.5px;font-size:11px;color:#000;">11.</div>
<div class="t" style="left:626.5px;top:385.5px;font-size:11px;color:#000;">|Z2|</div>
<div class="t" style="left:579.5px;top:402.5px;font-size:11px;color:#000;">12.</div>
<div class="t" style="left:626.5px;top:402.5px;font-size:11px;color:#000;">&lt;Z2</div>
<div class="b" style="left:553px;top:418px;width:165px;height:17px;background:#f0f0f0;"></div>
<div class="b" style="left:570px;top:419px;width:46px;height:15px;background:#cdcdcd;"></div>
<div class="b" style="left:587px;top:422px;width:10px;height:9px;background:#e8e8e8;"></div>
<svg style="left:558px;top:422px" width="6" height="9" viewBox="0 0 6 9"><path d="M5 0.5L1 4.5L5 8.5" stroke="#606060" stroke-width="1.3" fill="none"/></svg>
<svg style="left:707px;top:422px" width="6" height="9" viewBox="0 0 6 9"><path d="M1 0.5L5 4.5L1 8.5" stroke="#606060" stroke-width="1.3" fill="none"/></svg>
<div class="b" style="left:440px;top:117px;width:200px;height:20px;background:#fff;border:1px solid #767676;"></div>
<div class="t" style="left:446px;top:120.5px;font-size:11.2px;color:#575757;">View Extended S Parameters Results</div>
<svg style="left:438px;top:88px" width="14" height="21" viewBox="0 0 14 21"><path d="M0.5 0.5 V16.5 L4.3 12.8 L7 19.5 L9.6 18.4 L7 11.8 H12.2 Z" fill="#fff" stroke="#000" stroke-width="1" stroke-linejoin="miter"/></svg>
<div class="b" style="left:7px;top:445px;width:721px;height:4px;background:#e3e3e3;"></div>
<div class="b" style="left:7px;top:449px;width:721px;height:19px;background:#dadada;border:1px solid #b4b4b4;"></div>
<div class="t" style="left:8.5px;top:455px;font-size:10px;color:#000;">Values</div>
<svg style="left:699px;top:454px" width="9" height="10" viewBox="0 0 9 10" shape-rendering="crispEdges"><path d="M2.5 1H7.5V6.5H6.5" stroke="#000" fill="none"/><rect x="2" y="0" width="6" height="2" fill="#000"/><rect x="0.5" y="3.5" width="5.5" height="5" stroke="#000" fill="#fff"/><rect x="0" y="3" width="6.5" height="2" fill="#000"/></svg>
<svg style="left:714px;top:454.5px" width="10" height="9" viewBox="0 0 10 9"><path d="M1.5 1.2L8.5 7M8.5 1.2L1.5 7" stroke="#000" stroke-width="1.9" stroke-linecap="round"/></svg>
<div class="b" style="left:7px;top:470px;width:721px;height:97px;background:#fff;border:1px solid #828790;border-right:none"></div>
<div class="b" style="left:8px;top:471px;width:720px;height:22px;background:#fff;border-bottom:1px solid #e5e5e5;"></div>
<div class="b" style="left:62px;top:472px;width:1px;height:21px;background:#e5e5e5;"></div>
<div class="b" style="left:103px;top:472px;width:1px;height:21px;background:#e5e5e5;"></div>
<div class="b" style="left:196px;top:472px;width:1px;height:21px;background:#e5e5e5;"></div>
<div class="b" style="left:264px;top:472px;width:1px;height:21px;background:#e5e5e5;"></div>
<div class="b" style="left:301px;top:472px;width:1px;height:21px;background:#e5e5e5;"></div>
<div class="t" style="left:12.2px;top:477.5px;font-size:11.5px;color:#000;">Symbol</div>
<div class="t" style="left:66.5px;top:477.5px;font-size:11px;color:#000;">Name</div>
<div class="t" style="left:106.5px;top:477.5px;font-size:11px;color:#000;">Domain</div>
<div class="t" style="left:201.2px;top:477.5px;font-size:11px;color:#000;">Value</div>
<div class="t" style="left:269.2px;top:477.5px;font-size:11px;color:#000;">Units</div>
<div class="t" style="left:306px;top:477.5px;font-size:11px;color:#000;">Scale</div>
<div class="b" style="left:21px;top:500px;width:42px;height:2px;background:#0000ff;"></div>
<svg style="left:41px;top:495px" width="5" height="6" viewBox="0 0 5 6" shape-rendering="crispEdges"><polygon points="0,0 5,0 5,2 4,2 4,6 1,6 1,2 0,2" fill="#0000ff"/></svg>
<div class="t" style="left:66.5px;top:497px;font-size:11px;color:#000;">|Z1|</div>
<div class="t" style="left:106px;top:497px;font-size:10.9px;color:#000;">F= 10.0000 [GHz]</div>
<div class="t" style="left:200.2px;top:497px;font-size:11px;color:#000;">0.667078</div>
<div class="t" style="left:268px;top:497px;font-size:11px;color:#000;">[Ohm]</div>
<div class="t" style="left:304px;top:497px;font-size:11px;color:#000;">L</div>
<div class="b" style="left:21px;top:515px;width:42px;height:2px;background:#00dd00;"></div>
<svg style="left:41px;top:510px" width="5" height="6" viewBox="0 0 5 6" shape-rendering="crispEdges"><polygon points="0,0 5,0 5,2 4,2 4,6 1,6 1,2 0,2" fill="#00dd00"/></svg>
<div class="t" style="left:66.5px;top:512px;font-size:11px;color:#000;">&lt;Z1</div>
<div class="t" style="left:106px;top:512px;font-size:10.9px;color:#000;">F= 10.0000 [GHz]</div>
<div class="t" style="left:200.2px;top:512px;font-size:11px;color:#000;">89.999199</div>
<div class="t" style="left:268px;top:512px;font-size:11px;color:#000;">[deg]</div>
<div class="t" style="left:304px;top:512px;font-size:11px;color:#000;">R</div>
<div class="b" style="left:21px;top:530px;width:42px;height:2px;background:#ff0000;"></div>
<svg style="left:41px;top:525px" width="5" height="6" viewBox="0 0 5 6" shape-rendering="crispEdges"><polygon points="0,0 5,0 5,2 4,2 4,6 1,6 1,2 0,2" fill="#ff0000"/></svg>
<div class="t" style="left:66.5px;top:527px;font-size:11px;color:#000;">|Z2|</div>
<div class="t" style="left:106px;top:527px;font-size:10.9px;color:#000;">F= 10.0000 [GHz]</div>
<div class="t" style="left:200.2px;top:527px;font-size:11px;color:#000;">54.366554</div>
<div class="t" style="left:268px;top:527px;font-size:11px;color:#000;">[Ohm]</div>
<div class="t" style="left:304px;top:527px;font-size:11px;color:#000;">L</div>
<div class="b" style="left:21px;top:545px;width:42px;height:2px;background:#007700;"></div>
<svg style="left:41px;top:540px" width="5" height="6" viewBox="0 0 5 6" shape-rendering="crispEdges"><polygon points="0,0 5,0 5,2 4,2 4,6 1,6 1,2 0,2" fill="#007700"/></svg>
<div class="t" style="left:66.5px;top:542px;font-size:11px;color:#000;">&lt;Z2</div>
<div class="t" style="left:106px;top:542px;font-size:10.9px;color:#000;">F= 10.0000 [GHz]</div>
<div class="t" style="left:200.2px;top:542px;font-size:11px;color:#000;">0.023368</div>
<div class="t" style="left:268px;top:542px;font-size:11px;color:#000;">[deg]</div>
<div class="t" style="left:304px;top:542px;font-size:11px;color:#000;">R</div>
<div class="b" style="left:312px;top:569px;width:1px;height:17px;background:#d0d0d0;"></div>
<div class="b" style="left:323px;top:569px;width:1px;height:17px;background:#d0d0d0;"></div>
<div class="b" style="left:351px;top:569px;width:1px;height:17px;background:#d0d0d0;"></div>
<div class="b" style="left:438px;top:569px;width:1px;height:17px;background:#d0d0d0;"></div>
<div class="b" style="left:493px;top:569px;width:1px;height:17px;background:#d0d0d0;"></div>
<div class="b" style="left:585px;top:569px;width:1px;height:17px;background:#d0d0d0;"></div>
<div class="b" style="left:709px;top:569px;width:1px;height:17px;background:#d0d0d0;"></div>
<div class="t" style="left:327px;top:573px;font-size:11px;color:#000;">/EXT</div>
<div class="t" style="left:355.8px;top:573px;font-size:11px;color:#000;">Snap at=6000</div>
<div class="t" style="left:442.3px;top:573px;font-size:11px;color:#000;">Scale: Lin.</div>
<div class="t" style="left:497.3px;top:573px;font-size:10.2px;color:#000;">Ppos: SK1_TEMPL</div>
<div class="t" style="left:588.3px;top:573px;font-size:10.8px;color:#000;">Name: wgtocx_app_mod</div>
<svg style="left:716px;top:577px" width="10" height="9" viewBox="0 0 10 9" shape-rendering="crispEdges" fill="#b0b0b0"><rect x="7" y="0" width="2" height="2"/><rect x="4" y="3" width="2" height="2"/><rect x="7" y="3" width="2" height="2"/><rect x="1" y="6" width="2" height="2"/><rect x="4" y="6" width="2" height="2"/><rect x="7" y="6" width="2" height="2"/></svg>
</body></html>
